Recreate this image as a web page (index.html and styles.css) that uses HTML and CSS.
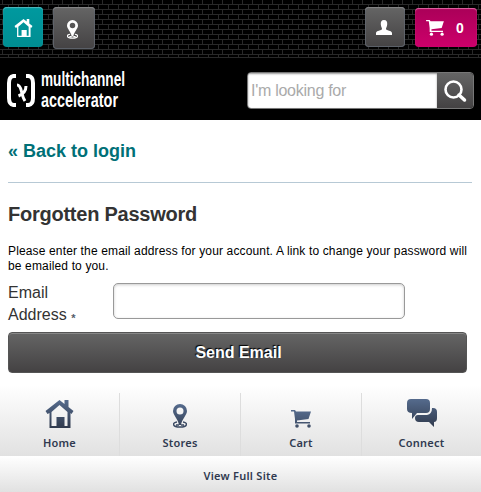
FILE: index.html
```html
<!DOCTYPE html>
<html lang="en">
<head>
<meta charset="utf-8">
<title>Forgotten Password</title>
<link rel="stylesheet" href="styles.css">
</head>
<body>
<svg class="defs" width="0" height="0">
  <defs>
    <linearGradient id="navy" x1="0" y1="0" x2="0" y2="28" gradientUnits="userSpaceOnUse"><stop offset="0" stop-color="#556b8d"/><stop offset="1" stop-color="#303a4d"/></linearGradient>
    <symbol id="house" viewBox="0 0 28 28"><path d="M14 0 0 11l2 3 2-1v15h21V13l1 1 2-3-5-4V0h-4v4zm0 5 8 7v14h-3V17h-8v9H6V12z"/></symbol>
    <symbol id="pin" viewBox="0 0 14 24"><path fill-rule="evenodd" d="M7 0a7 7 0 0 0-7 7c0 4 5 8 6 14h2c1-6 6-10 6-14a7 7 0 0 0-7-7zm0 3.500a3.500 3.500 0 1 1 0 7 3.500 3.500 0 0 1 0-7z"/><path fill="none" stroke="currentColor" stroke-width="1.500" d="M4 18C-1 18.500-1 23 7 23s8-4.500 3-5M3 21h3m2 0h3"/></symbol>
    <symbol id="cart" viewBox="0 0 20 18"><path d="M0 0h4l1 1.500h15l-2.500 7.500L6 10.500V12h13v1.500H4V9L3 1.500H0z"/><circle cx="6" cy="16" r="1.800"/><circle cx="18" cy="16" r="1.800"/></symbol>
  </defs>
</svg>
<header>
  <div class="topbar">
    <a class="tile teal"><svg width="19" height="18"><use href="#house"/></svg></a>
    <a class="tile store"><svg width="11" height="19"><use href="#pin"/></svg></a>
    <a class="tile user"><svg width="16" height="15" viewBox="0 0 16 15"><path d="M8 0c2.500 0 3.500 2 3.200 4.500C11 7 10 7.500 10 9c0 1.500 6 1.500 6 4v2H0v-2c0-2.500 6-2.500 6-4C6 7.500 5 7 4.800 4.500 4.500 2 5.500 0 8 0z"/></svg></a>
    <a class="tile basket"><svg width="18" height="16"><use href="#cart"/></svg><span>0</span></a>
  </div>
  <div class="brand">
    <svg class="logo" width="122" height="44" viewBox="0 0 122 44">
      <path d="M10 6v4H8q-3 0-3 5v15q0 5 3 5h2v4H7q-6-1-6-9V15q0-8 6-9zM20 6v4h2q3 0 3 5v15q0 5-3 5h-2v4h3q6-1 6-9V15q0-8-6-9z" fill="#fff"/>
      <path d="M11 17q3 0 4.500 6.500T19 33M20 18q0 7-7.500 10" fill="none" stroke="#fff" stroke-width="3"/>
      <text x="35" y="18" textLength="84" lengthAdjust="spacingAndGlyphs">multichannel</text>
      <text x="35" y="38.500" textLength="77" lengthAdjust="spacingAndGlyphs">accelerator</text>
    </svg>
    <form class="search"><span>I'm looking for</span><b><svg width="22" height="22" viewBox="0 0 22 22"><circle cx="9.500" cy="9.500" r="8" fill="none" stroke="#fff" stroke-width="2.600"/><path d="M15 15l5.500 5" stroke="#fff" stroke-width="3.500" stroke-linecap="round"/></svg></b></form>
  </div>
</header>
<main>
  <a class="back">« Back to login</a>
  <h1>Forgotten Password</h1>
  <p>Please enter the email address for your account. A link to change your password will<br>be emailed to you.</p>
  <div class="field"><label>Email<br>Address <small>*</small></label><input type="email"></div>
  <button>Send Email</button>
</main>
<footer>
  <nav>
    <a><svg width="29" height="28"><use href="#house"/></svg><span>Home</span></a>
    <a><svg width="14" height="24"><use href="#pin"/></svg><span>Stores</span></a>
    <a><svg width="20" height="18"><use href="#cart"/></svg><span>Cart</span></a>
    <a><svg width="30" height="29" viewBox="0 0 30 29"><path d="M4 0h15q4 0 4 4v6q0 4-4 4h-9l-5 6v-6q-5 0-5-4V4q0-4 4-4z"/><path d="M25 9h1q4 0 4 4v6q0 4-3 4v5l-5-5H12q-4 0-4-4 0-3 3-3h9q5-1 5-7z"/></svg><span>Connect</span></a>
  </nav>
  <a class="full">View Full Site</a>
</footer>
</body>
</html>
```
FILE: styles.css
```css
* { box-sizing: border-box; }
body { margin: 0; width: 481px; height: 492px; overflow: hidden; background: #fff; font-family: "Liberation Sans", Arial, sans-serif; }
.defs { position: absolute; }
svg { display: block; fill: currentColor; overflow: visible; }
header { background: #000; height: 120px; }
.topbar {
  height: 58px; padding: 7px 4px 0 3px; display: flex; align-items: flex-start; color: #fff;
  border-bottom: 1px solid #292929;
  background-color: #000;
  background-image:
    linear-gradient(transparent 4px, #292929 4px),
    conic-gradient(from 0deg at 1px 5px, transparent 270deg, #292929 270deg),
    conic-gradient(from 0deg at 1px 5px, transparent 270deg, #292929 270deg);
  background-size: 10px 5px, 10px 10px, 10px 10px;
  background-position: 0 0, 2px 0, 8px 5px;
}
.tile { display: flex; align-items: center; justify-content: center; width: 40px; height: 40px; border-radius: 4px; background: linear-gradient(#656565, #444243); box-shadow: inset 0 1px 1px #888, inset 0 0 0 1px #5b6068; }
.teal { background: linear-gradient(#00999f, #008e92); box-shadow: inset 0 1px 1px #50b9bc; padding-top: 2px; }
.store { width: 42px; height: 42px; margin-left: 10px; padding: 2px 3px 0 0; }
.user { margin-left: auto; padding-right: 2px; }
.basket { width: 62px; margin: 1px 0 0 10px; height: 39px; background: linear-gradient(#aa0058, #cd006b); box-shadow: inset 0 1px 1px #dd6aa5; gap: 12px; padding-right: 2px; font: bold 14px "Liberation Sans", sans-serif; }
.brand { display: flex; padding: 10px 7px 0 6px; justify-content: space-between; }
.logo text { fill: #fff; font: bold 20px "Liberation Sans Narrow", "Liberation Sans", sans-serif; }
.search { display: flex; width: 227px; height: 37px; margin-top: 4px; border: 1px solid #777; border-radius: 4px; overflow: hidden; }
.search span { flex: 1; background: #fff; color: #aaa; font-size: 16px; letter-spacing: -.27px; line-height: 35px; padding-left: 3px; box-shadow: inset 0 1px 2px #999; }
.search b { width: 36px; display: flex; align-items: center; justify-content: center; background: linear-gradient(#656565, #444243); }
main { padding: 0 9px 0 8px; height: 265px; }
.back { display: block; height: 63px; padding-top: 20px; border-bottom: 1px solid #b7c9d5; color: #007077; font-weight: bold; font-size: 18px; line-height: 22px; }
h1 { margin: 19px 0 0; font-size: 20px; line-height: 24px; letter-spacing: -.24px; color: #333; }
p { margin: 18px 0 0; font-size: 12px; line-height: 15px; letter-spacing: .145px; color: #000; white-space: nowrap; }
.field { display: flex; padding-top: 8px; }
label { width: 105px; font-size: 16px; line-height: 22px; color: #333; }
small { font-size: 11px; font-weight: bold; color: #555c6b; position: relative; top: 2px; }
input { width: 292px; height: 36px; margin: 1px 0 0; border: 1px solid #999; border-radius: 5px; box-shadow: inset 0 1px 3px #ccc; }
button { display: block; width: 459px; height: 41px; margin-top: 5px; padding: 0 0 0 2px; border: 1px solid #555; border-radius: 4px; background: linear-gradient(#656565, #444243); box-shadow: inset 0 1px 0 #888; color: #fff; font: bold 16px "Liberation Sans", sans-serif; text-shadow: -1px -1px 1px #000; }
footer { color: #303a50; font: 600 11px/14px "Noto Sans", sans-serif; letter-spacing: .25px; }
nav { display: grid; grid-template-columns: 119px 121px 121px 120px; height: 71px; background: linear-gradient(#fff, #e1e1e1); padding-top: 8px; }
nav a { display: flex; flex-direction: column; justify-content: flex-end; align-items: center; padding-bottom: 6px; border-left: 1px solid #ddd; }
nav a:first-child { border: 0; }
nav svg { fill: url(#navy); color: #3b4a63; margin-bottom: 8px; }
.full { display: block; height: 36px; line-height: 40px; text-align: center; background: linear-gradient(#fff, #e1e1e1); }
```
